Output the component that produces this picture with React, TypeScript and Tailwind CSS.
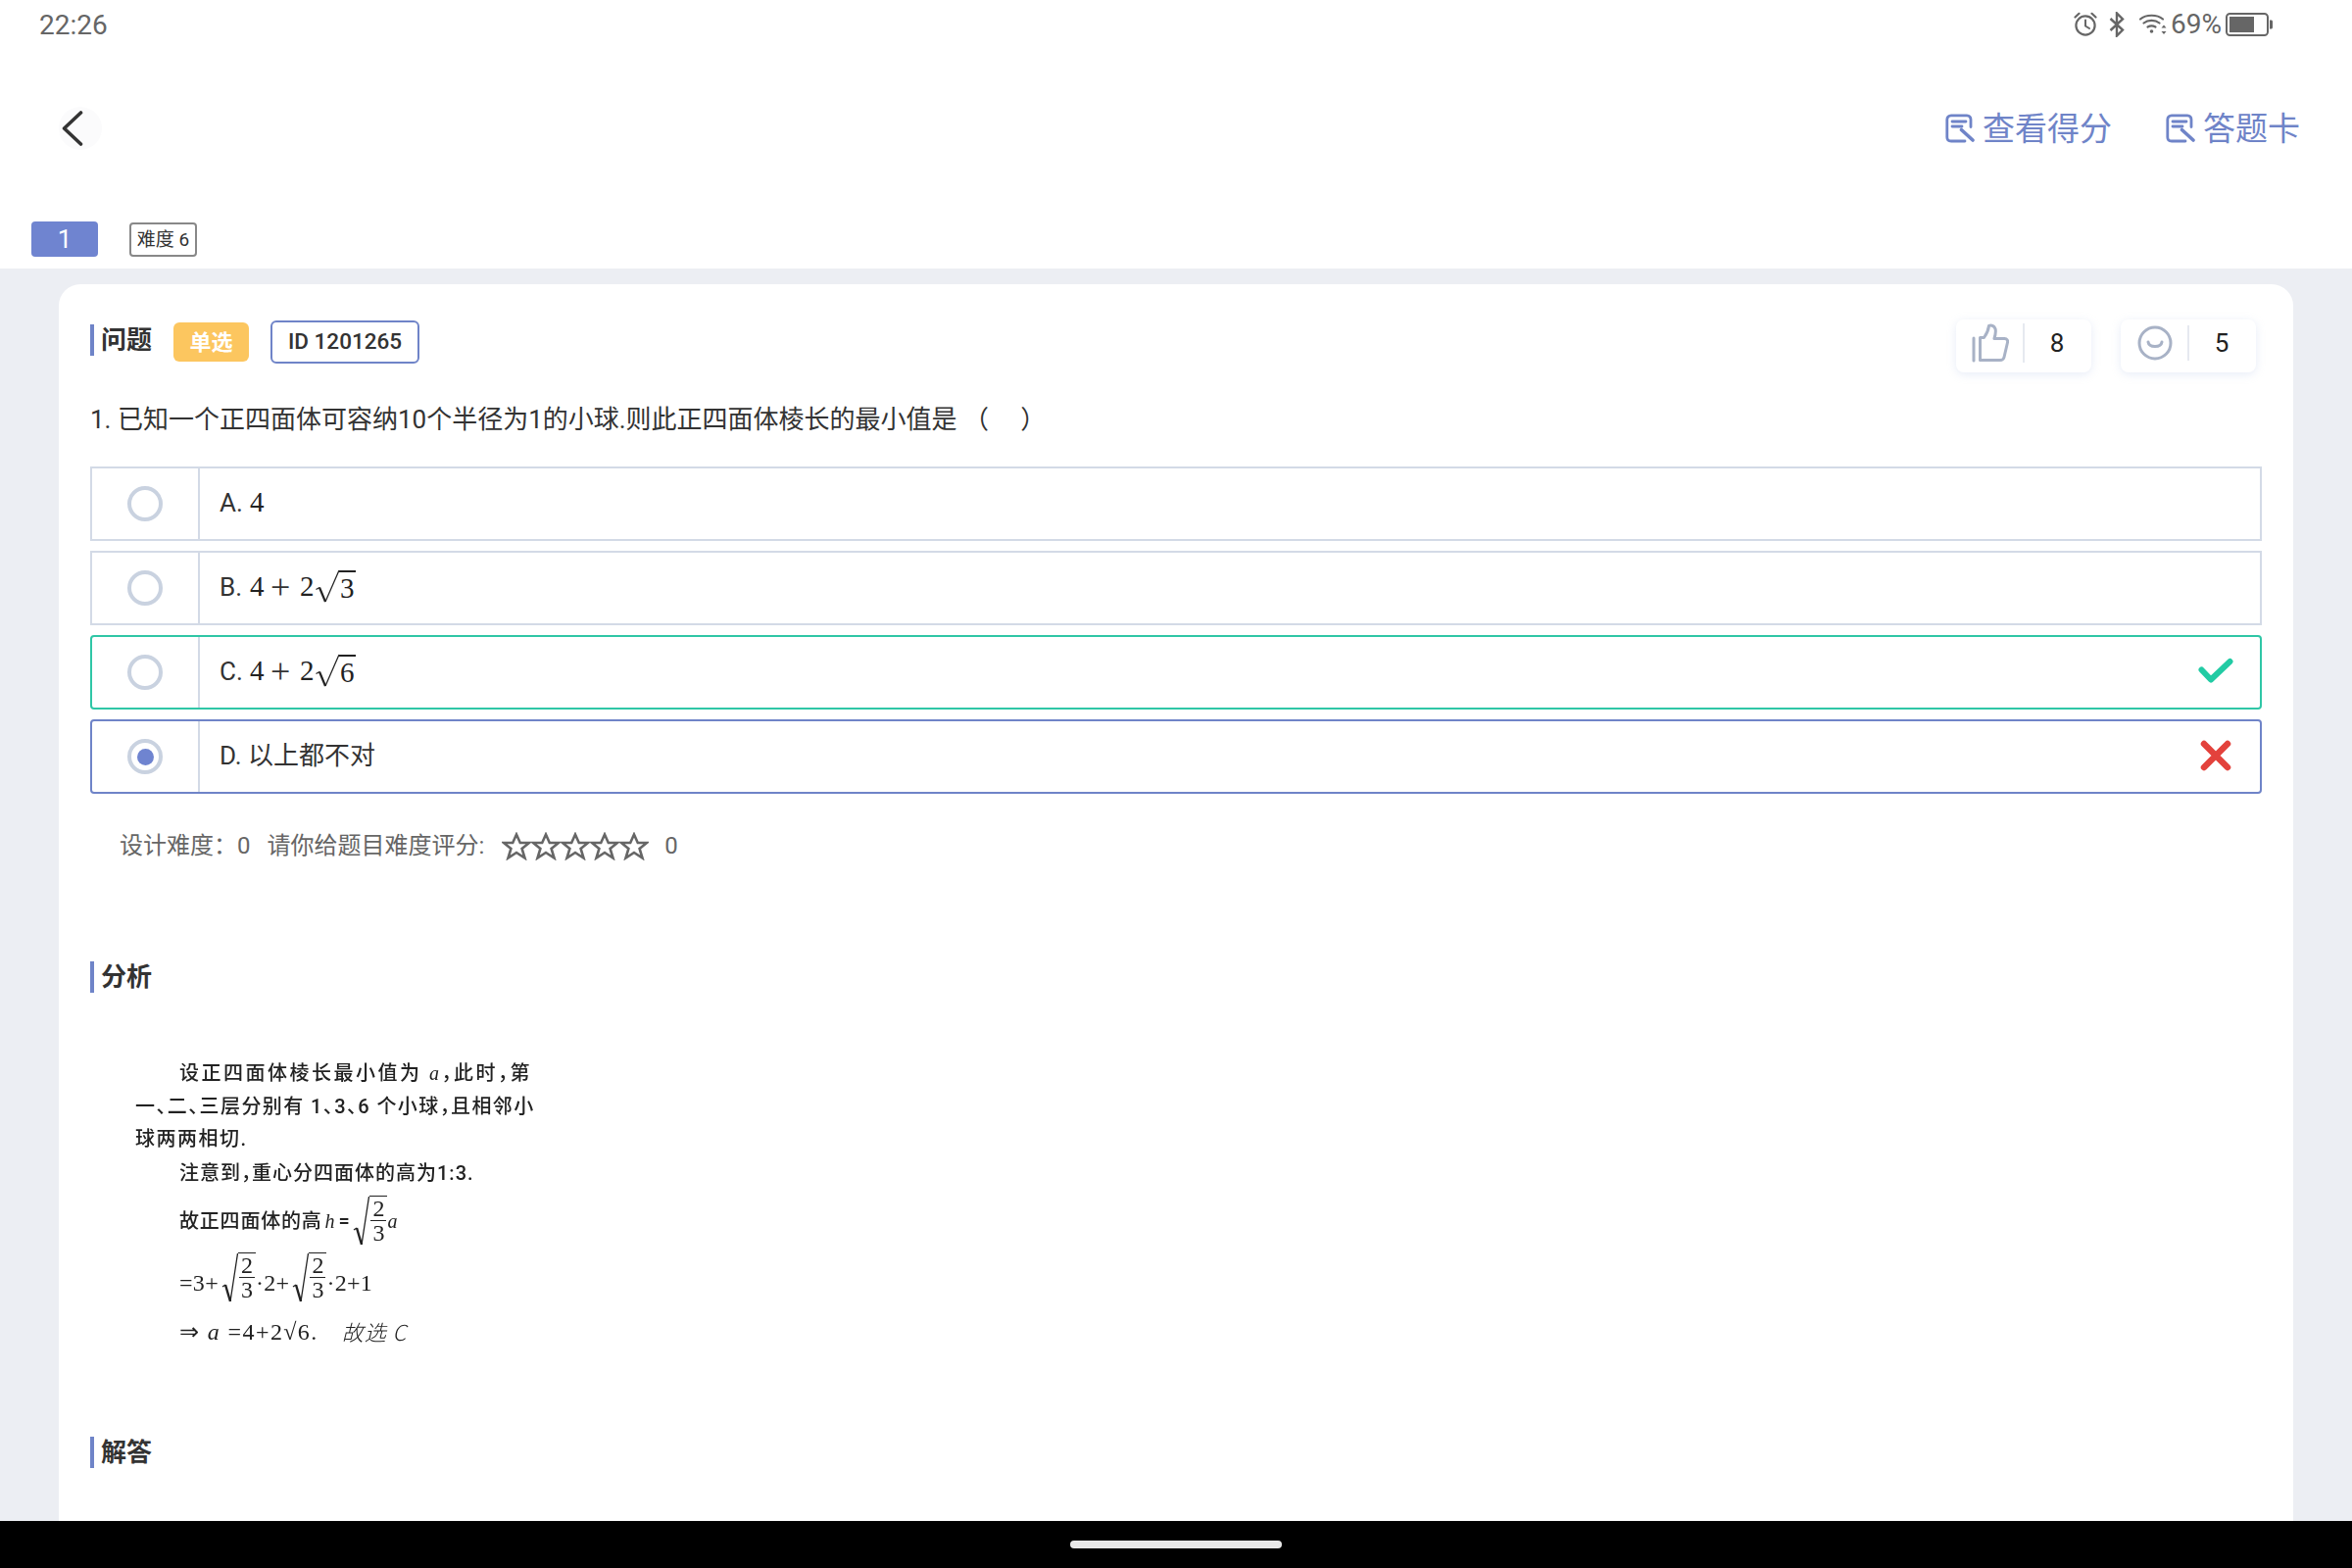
import React from "react";

const sans = 'font-["Roboto","Noto_Sans_CJK_SC",sans-serif]';

function Alarm() {
  return (
    <svg width="24" height="26" viewBox="0 0 24 26" fill="none" stroke="#666" strokeWidth="2.2" strokeLinecap="round">
      <circle cx="12" cy="14" r="9.6" />
      <path d="M12 8.5V14.5L16 17" strokeWidth="2" />
      <path d="M1.5 5.5L5.5 1.8M22.5 5.5L18.5 1.8" strokeWidth="2.2" />
    </svg>
  );
}
function Bt() {
  return (
    <svg width="16" height="26" viewBox="0 0 16 26" fill="none" stroke="#666" strokeWidth="2.4">
      <path d="M1.5 7L14 18.5L8 24.5V1.5L14 7.5L1.5 19" />
    </svg>
  );
}
function Wifi() {
  return (
    <svg width="28" height="24" viewBox="0 0 28 24" fill="none" stroke="#666" strokeWidth="2.2" strokeLinecap="round">
      <path d="M1 6.5C7 1.5 18 1.5 24 6.5" />
      <path d="M4.5 10.5C9 7 16 7 20.5 10.5" />
      <path d="M8.5 14.5C11 13 14 13 16.5 14.5" />
      <circle cx="12.5" cy="19" r="1.8" fill="#666" stroke="none" />
      <path d="M25 12.5L27.5 15.5H22.5ZM25 22L27.5 19H22.5Z" fill="#666" stroke="none" />
    </svg>
  );
}
function Battery() {
  return (
    <svg width="48" height="24" viewBox="0 0 48 24" fill="none">
      <rect x="1" y="1" width="42" height="22" rx="3.5" stroke="#666" strokeWidth="2" />
      <rect x="4" y="4" width="25" height="16" fill="#666" />
      <path d="M45 7.5H46.5C47.3 7.5 48 8.2 48 9V15C48 15.8 47.3 16.5 46.5 16.5H45Z" fill="#666" />
    </svg>
  );
}
function NoteIcon() {
  return (
    <svg width="30" height="31" viewBox="0 0 30 31" fill="none" stroke="#6f84c8" strokeWidth="2.8" strokeLinecap="round" strokeLinejoin="round">
      <path d="M26 13.5V6C26 3.5 24.5 1.8 22 1.8H6C3.5 1.8 1.8 3.5 1.8 6V24C1.8 26.5 3.5 28 6 28H20" />
      <path d="M7 8H21M7 13H17" />
      <path d="M16.5 16.5L28 27" strokeWidth="3.6" />
    </svg>
  );
}
function Thumb() {
  return (
    <svg width="38" height="40" viewBox="0 0 38 40" fill="none" stroke="#a8b2c6" strokeWidth="3" strokeLinejoin="round" strokeLinecap="round">
      <path d="M2 15V38" />
      <path d="M8.5 37.5V14.5H12.5C15 11 17 7 17.5 2.5C20 1.5 23 2.5 24 5.5C25 8.5 24 12 23 15.5H33.5C36 15.5 37 17.5 36.5 19.5L33 34.5C32.5 36.5 31 37.5 29 37.5Z" />
    </svg>
  );
}
function Smile() {
  return (
    <svg width="36" height="36" viewBox="0 0 36 36" fill="none" stroke="#a8b2c6" strokeWidth="3" strokeLinecap="round">
      <circle cx="18" cy="18" r="16" />
      <path d="M11 17C12 23 24 23 25 17" />
    </svg>
  );
}
function Star() {
  return (
    <svg width="30" height="29" viewBox="0 0 30 29" fill="none" stroke="#666" strokeWidth="2.6" strokeLinejoin="miter">
      <path d="M15 2.5L18.8 11H28L20.6 17L23.5 26.5L15 21L6.5 26.5L9.4 17L2 11H11.2Z" />
    </svg>
  );
}
function Check() {
  return (
    <svg width="36" height="28" viewBox="0 0 36 28" fill="none" stroke="#22cba4" strokeWidth="6" strokeLinecap="round" strokeLinejoin="round">
      <path d="M3.5 12.5L13 22.5L32.5 4" />
    </svg>
  );
}
function Cross() {
  return (
    <svg width="32" height="32" viewBox="0 0 32 32" fill="none" stroke="#e3423c" strokeWidth="6.5" strokeLinecap="round">
      <path d="M4 4L28 28M28 4L4 28" />
    </svg>
  );
}

function Heading({ children }: { children: React.ReactNode }) {
  return (
    <div className="flex h-[32px] items-center">
      <div className="h-[32px] w-[4px] bg-[#6f84c8]" />
      <span className="ml-[7px] text-[26px] font-bold leading-[32px] text-[#333]">{children}</span>
    </div>
  );
}

function MathSqrt({ d }: { d: string }) {
  return (
    <span className="inline-flex items-start">
      <svg width="26" height="36" viewBox="0 0 26 36" fill="none" stroke="#222" className="-mr-px">
        <path d="M1.5 20.5L5 18.5" strokeWidth="1.2" />
        <path d="M5 18.5L11 33" strokeWidth="2.2" />
        <path d="M11 33L25 1" strokeWidth="1.2" />
      </svg>
      <span className="mt-px border-t-2 border-[#222] px-px text-[29px] leading-[32px]">{d}</span>
    </span>
  );
}

function OptionMath({ label, d }: { label: string; d: string }) {
  return (
    <span className="flex items-center text-[26px] text-[#333]">
      <span className="w-[31px]">{label}</span>
      <span className='flex items-center font-["Liberation_Serif",serif] text-[29px] text-[#222]'>
        <span className="w-[21px]">4</span>
        <span className="w-[30px] text-[36px] leading-[36px] text-[#333]">+</span>
        <span className="w-[15px]">2</span>
        <MathSqrt d={d} />
      </span>
    </span>
  );
}

function Option({
  border,
  rounded,
  selected,
  children,
  mark,
}: {
  border: string;
  rounded?: boolean;
  selected?: boolean;
  children: React.ReactNode;
  mark?: React.ReactNode;
}) {
  return (
    <div className={`flex h-[76px] items-stretch border-2 ${border} ${rounded ? "rounded-[4px]" : ""}`}>
      <div className="flex w-[110px] shrink-0 items-center justify-center border-r-2 border-[#d3dae6]">
        <div className="flex h-[36px] w-[36px] items-center justify-center rounded-full border-4 border-[#c9d2e0]">
          {selected && <div className="h-[17px] w-[17px] rounded-full bg-[#6f84d0]" />}
        </div>
      </div>
      <div className="flex flex-1 items-center pb-[2px] pl-[20px] pr-[27px]">
        <div className="flex-1">{children}</div>
        {mark}
      </div>
    </div>
  );
}

function Frac() {
  return (
    <span className="inline-flex items-stretch">
      <svg width="17" height="52" viewBox="0 0 17 52" fill="none" stroke="#222" className="shrink-0">
        <path d="M1 35L4 33" strokeWidth="1.3" />
        <path d="M4 33L9 50" strokeWidth="2.4" />
        <path d="M9 50L16.5 1" strokeWidth="1.3" />
      </svg>
      <span className='flex flex-col items-center border-t-[1.5px] border-[#222] px-[1px] font-["Liberation_Serif",serif] text-[24px] leading-[24px] tracking-normal'>
        <span className="border-b-[1.5px] border-[#222] px-[2px]">2</span>
        <span>3</span>
      </span>
    </span>
  );
}

function ScanLine({ h, indent, className, children }: { h: string; indent?: boolean; className?: string; children: React.ReactNode }) {
  return (
    <div className={`flex items-center whitespace-pre ${h} ${indent ? "pl-[45px]" : ""} ${className ?? ""}`}>{children}</div>
  );
}

export default function App() {
  return (
    <div className={`flex h-[1600px] w-[2400px] flex-col overflow-hidden bg-white ${sans}`}>
      {/* status bar */}
      <div className="flex h-[50px] shrink-0 items-center justify-between pl-[40px] pr-[81px] text-[28px] leading-none text-[#666]">
        <span className="pt-[1px]">22:26</span>
        <div className="flex items-center">
          <Alarm />
          <span className="ml-[12px] flex"><Bt /></span>
          <span className="ml-[15px] flex"><Wifi /></span>
          <span className="ml-[4px]">69%</span>
          <span className="ml-[4px] flex"><Battery /></span>
        </div>
      </div>

      {/* nav */}
      <div className="flex h-[162px] shrink-0 items-center justify-between pl-[60px] pr-[53px]">
        <div className="flex h-[44px] w-[44px] items-center rounded-full bg-[#fbfbfc] pl-[3px]">
          <svg width="22" height="36" viewBox="0 0 22 36" fill="none" stroke="#333" strokeWidth="3.6" strokeLinecap="round" strokeLinejoin="round">
            <path d="M19.5 2L2.5 18L19.5 34" />
          </svg>
        </div>
        <div className="flex items-center text-[33px] leading-none text-[#6f84c8]">
          <NoteIcon />
          <span className="ml-[8px]">查看得分</span>
          <span className="ml-[55px] flex"><NoteIcon /></span>
          <span className="ml-[8px]">答题卡</span>
        </div>
      </div>

      {/* tabs */}
      <div className="flex h-[62px] shrink-0 items-start pl-[32px] pt-[14px]">
        <div className="flex h-[36px] w-[68px] items-center justify-center rounded-[4px] bg-[#6f84d0] text-[26px] text-white">1</div>
        <div className="ml-[32px] mt-[1px] flex h-[35px] w-[69px] items-center justify-center whitespace-nowrap rounded-[4px] border-2 border-[#888] pt-[2px] text-[19px] text-[#333]">难度 6</div>
      </div>

      {/* body */}
      <div className="min-h-0 flex-1 bg-[#eceef3] px-[60px] pt-[16px]">
        <div className="h-full rounded-t-[22px] bg-white px-[32px] pt-[36px]">
          <div className="flex items-start justify-between">
            <div className="mt-[1px] flex h-[44px] items-center">
              <div className="mb-[4px]">
                <Heading>问题</Heading>
              </div>
              <div className="ml-[22px] flex h-[40px] w-[77px] items-center justify-center rounded-[6px] bg-[#fcc65f] text-[22px] font-bold text-white">单选</div>
              <div className="ml-[22px] flex h-[44px] w-[152px] items-center justify-center rounded-[6px] border-2 border-[#6f84c8] text-[22.5px] font-medium text-[#333]">ID 1201265</div>
            </div>
            <div className="mr-[6px] flex gap-[30px]">
              {[
                { icon: <Thumb />, n: "8" },
                { icon: <Smile />, n: "5" },
              ].map((b) => (
                <div key={b.n} className="flex h-[54px] w-[138px] items-center rounded-[8px] bg-white pb-[6px] shadow-[0_2px_10px_rgba(170,185,225,0.28)]">
                  <div className="flex w-[70px] items-center justify-center border-r-2 border-[#e6e9f0] pl-[2px]">{b.icon}</div>
                  <div className="flex-1 pr-[2px] text-center text-[26px] text-[#222]">{b.n}</div>
                </div>
              ))}
            </div>
          </div>

          <div className="mt-[30px] h-[36px] text-[26px] leading-[36px] text-[#333]">
            1. 已知一个正四面体可容纳10个半径为1的小球.则此正四面体棱长的最小值是 （&nbsp;&nbsp;&nbsp;&nbsp;&nbsp;）
          </div>

          <div className="mt-[30px] flex flex-col gap-[10px]">
            <Option border="border-[#d3dae6]">
              <span className="flex items-center text-[26px] text-[#333]">
                <span className="w-[31px]">A.</span>
                <span className='font-["Liberation_Serif",serif] text-[29px] text-[#222]'>4</span>
              </span>
            </Option>
            <Option border="border-[#d3dae6]">
              <OptionMath label="B." d="3" />
            </Option>
            <Option border="border-[#2fc6a6]" rounded mark={<Check />}>
              <OptionMath label="C." d="6" />
            </Option>
            <Option border="border-[#6f84c8]" rounded selected mark={<span className="mr-[2px] flex"><Cross /></span>}>
              <span className="text-[26px] text-[#333]">D. 以上都不对</span>
            </Option>
          </div>

          <div className="mt-[35px] flex h-[36px] items-center pl-[30px] text-[24px] text-[#666]">
            <span>设计难度：0</span>
            <span className="ml-[17px]">请你给题目难度评分:</span>
            <div className="ml-[18px] flex">
              {[0, 1, 2, 3, 4].map((i) => (
                <Star key={i} />
              ))}
            </div>
            <span className="ml-[16px]">0</span>
          </div>

          <div className="mt-[100px]">
            <Heading>分析</Heading>
          </div>

          <div className="ml-[46px] mt-[65px] w-[410px] text-[20px] font-medium text-[#222] blur-[0.3px] [font-feature-settings:'halt']">
            <ScanLine h="h-[33px]" indent className="tracking-[2.5px]">
              设正四面体棱长最小值为 <i className='font-["Liberation_Serif",serif]'>a</i>，此时，第
            </ScanLine>
            <ScanLine h="h-[36px]" className="tracking-[1.4px]">
              一、二、三层分别有 1、3、6 个小球，且相邻小
            </ScanLine>
            <ScanLine h="h-[30px]" className="tracking-[1.5px]">
              球两两相切.
            </ScanLine>
            <ScanLine h="h-[40px]" indent className="tracking-[1px]">
              注意到，重心分四面体的高为1:3.
            </ScanLine>
            <ScanLine h="h-[58px]" indent className="tracking-[0.8px]">
              故正四面体的高<i className='ml-[3px] font-["Liberation_Serif",serif]'>h</i><span className="mx-[3px]">=</span><Frac /><i className='font-["Liberation_Serif",serif]'>a</i>
            </ScanLine>
            <ScanLine h="h-[68px]" indent className='font-["Liberation_Serif",serif] text-[24px] tracking-[0.3px]'>
              =3+<span className="ml-[3px]"><Frac /></span>·2+<span className="ml-[3px]"><Frac /></span>·2+1
            </ScanLine>
            <ScanLine h="h-[35px]" indent className='pb-[4px] font-["Liberation_Serif",serif] text-[24px] tracking-[1.4px]'>
              ⇒ <i>a</i> =4+2√6.<span className='ml-[24px] font-["Noto_Sans_CJK_SC",sans-serif] text-[22px] font-light italic tracking-[1px]'>故选 C</span>
            </ScanLine>
          </div>

          <div className="mt-[88px]">
            <Heading>解答</Heading>
          </div>
        </div>
      </div>

      {/* nav bar */}
      <div className="flex h-[48px] shrink-0 justify-center bg-black pt-[20px]">
        <div className="h-[8px] w-[216px] rounded-full bg-[#e8e8e8]" />
      </div>
    </div>
  );
}
